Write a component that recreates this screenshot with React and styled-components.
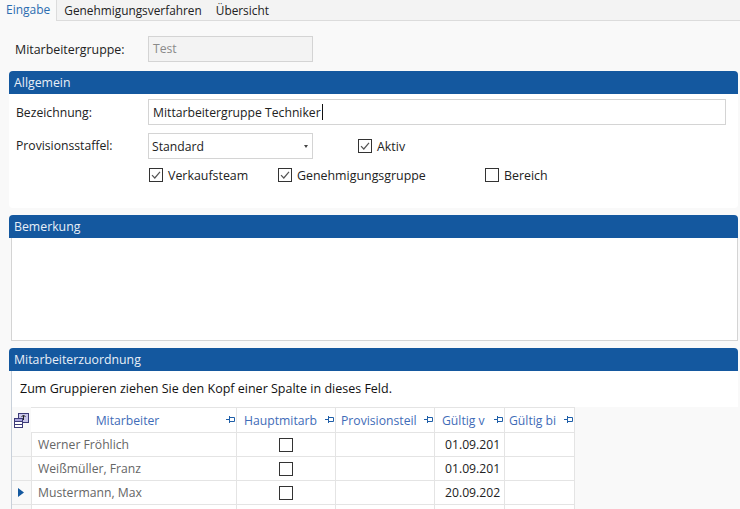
import styled, { createGlobalStyle } from 'styled-components';

const GlobalStyle = createGlobalStyle`
  html, body {
    margin: 0;
    height: 100%;
    overflow: hidden;
    background: #f9f9f9;
  }
  body {
    font-family: "Open Sans", "Noto Sans", sans-serif;
    font-size: 12.2px;
    color: #222;
  }
`;

const Page = styled.div`
  width: 740px;
  height: 509px;
  overflow: hidden;
`;

const TabBar = styled.div`
  display: flex;
  height: 20px;
  background: #f3f3f3;
  border-bottom: 1px solid #dcdcdc;
`;

const Tab = styled.div`
  height: ${p => (p.$active ? '21px' : '20px')};
  padding: 0 ${p => (p.$active ? '6px' : '7px')};
  line-height: 20px;
  font-size: ${p => (p.$active ? '12px' : '11.85px')};
  color: ${p => (p.$active ? '#2b6cb0' : '#222')};
  background: ${p => (p.$active ? '#f9f9f9' : 'transparent')};
  border-right: ${p => (p.$active ? '1px solid #dcdcdc' : 'none')};
`;

const Content = styled.div`
  padding: 15px 2px 0 9px;
`;

const TopRow = styled.div`
  display: flex;
  align-items: flex-start;
  height: 26px;
  margin-bottom: 9px;
`;

const Label = styled.label`
  width: ${p => p.$width || '139px'};
  padding-left: ${p => p.$indent || '7px'};
  margin-top: ${p => p.$nudge || '0'};
  font-size: ${p => p.$size || 'inherit'};
  box-sizing: border-box;
  flex-shrink: 0;
`;

const Section = styled.section`
  margin-bottom: ${p => p.$gap || '7px'};
`;

const SectionHeader = styled.div`
  height: 23px;
  line-height: 23px;
  padding-left: 5px;
  background: #14589f;
  color: #e8eff7;
  font-size: 12.3px;
  border-top-left-radius: 4px;
  border-top-right-radius: 4px;
`;

const FormBody = styled.div`
  height: 114px;
  background: #fff;
  border-radius: 0 0 4px 4px;
  padding-top: 5px;
  box-sizing: border-box;
`;

const FormRow = styled.div`
  display: flex;
  align-items: center;
  height: ${p => p.$height || '26px'};
  margin-bottom: ${p => p.$gap || '8px'};
`;

const Field = styled.div`
  width: ${p => p.$width || '165px'};
  height: 26px;
  box-sizing: border-box;
  display: flex;
  align-items: center;
  justify-content: space-between;
  padding: 0 ${p => p.$pad || '4px'};
  border: 1px solid #d4d4d4;
  background: ${p => (p.$disabled ? '#f3f3f3' : '#fff')};
  color: ${p => (p.$disabled ? '#8a8a8a' : '#222')};
`;

const Caret = styled.span`
  width: 1px;
  height: 16px;
  background: #111;
  margin-left: 1px;
`;

const FieldText = styled.span`
  display: flex;
  align-items: center;
  margin-top: ${p => p.$nudge || '0'};
`;

const SelectArrow = styled.span`
  border-left: 2.5px solid transparent;
  border-right: 2.5px solid transparent;
  border-top: 3px solid #444;
  margin-right: 1px;
`;

const Check = styled.span`
  width: 14px;
  height: 14px;
  box-sizing: border-box;
  border: 1px solid #333;
  background: #fff;
  display: flex;
  align-items: center;
  justify-content: center;
  flex-shrink: 0;
`;

const CheckItem = styled.div`
  display: flex;
  align-items: center;
  gap: 5px;
  font-size: 12.4px;
  margin-left: ${p => p.$left || '0'};
  width: ${p => p.$width || 'auto'};
`;

const NoteBody = styled.div`
  height: 102px;
  margin-left: 2px;
  background: #fff;
  border: 1px solid #d4d4d4;
  border-top: none;
`;

const AssignBody = styled.div`
  margin-left: 2px;
  border-left: 1px solid #c8d0da;
  height: 140px;
`;

const GroupHint = styled.div`
  height: 36px;
  line-height: 36px;
  padding-left: 8px;
  background: #fff;
  color: #111;
  font-size: 12.5px;
`;

const Grid = styled.div`
  display: grid;
  grid-template-columns: 19px 206px 99px 99px 70px 70px;
  grid-template-rows: 26px;
  grid-auto-rows: 24px;
  width: 563px;
  background: #fff;
`;

const Corner = styled.div`
  display: flex;
  align-items: center;
  padding-left: 2px;
  background: #f9f9f9;
`;

const HeadCell = styled.div`
  display: flex;
  align-items: center;
  justify-content: ${p => (p.$center ? 'center' : 'flex-start')};
  position: relative;
  padding: 0 ${p => p.$padRight || '0'} 0 ${p => p.$pad || '7px'};
  box-sizing: border-box;
  border-top: 1px solid #e4e4e4;
  border-right: 1px solid #e4e4e4;
  border-bottom: 1px solid #e4e4e4;
  color: #3f6cb8;
  background: #fff;
`;

const Pin = styled.svg`
  position: absolute;
  right: 1px;
  top: 8px;
`;

const RowMark = styled.div`
  display: flex;
  align-items: center;
  padding-left: 6px;
  background: #f9f9f9;
  border-bottom: 1px solid #e4e4e4;
`;

const Cell = styled.div`
  display: flex;
  align-items: center;
  justify-content: ${p => (p.$center ? 'center' : 'flex-start')};
  padding-left: ${p => (p.$center ? '0' : p.$pad || '6px')};
  box-sizing: border-box;
  overflow: hidden;
  white-space: nowrap;
  border-left: ${p => (p.$first ? '1px solid #e4e4e4' : 'none')};
  border-right: 1px solid #e4e4e4;
  border-bottom: 1px solid #e4e4e4;
  color: ${p => (p.$muted ? '#666' : '#222')};
`;

const Tick = () => (
  <svg width="10" height="10" viewBox="0 0 10 10">
    <path d="M1 5.2 L3.8 8 L9 1.8" fill="none" stroke="#555" strokeWidth="1.2" />
  </svg>
);

const PinIcon = () => (
  <Pin width="9" height="7" viewBox="0 0 9 7">
    <path d="M0 3.5 H3 M3.5 0 V7 M3.5 1.5 H8.5 V5.5 H3.5" fill="none" stroke="#1f5fa8" strokeWidth="1" />
  </Pin>
);

const ColumnChooser = () => (
  <svg width="15" height="15" viewBox="0 0 15 15">
    <rect x="4.5" y="0.5" width="10" height="9" fill="#c9c6ea" stroke="#3c3a78" />
    <path d="M9.5 7 V2.5 M7.5 4 L9.5 2 L11.5 4" fill="none" stroke="#222" />
    <rect x="0.5" y="5.5" width="8" height="9" fill="#fff" stroke="#3c3a78" />
    <path d="M0.5 8.5 H8.5 M0.5 11.5 H8.5" stroke="#3c3a78" />
    <rect x="1" y="6" width="7" height="2" fill="#a9a5dc" />
  </svg>
);

const columns = [
  { title: 'Mitarbeiter', center: true, pad: '0', padRight: '12px' },
  { title: 'Hauptmitarb' },
  { title: 'Provisionsteil', pad: '5px' },
  { title: 'Gültig v' },
  { title: 'Gültig bi', pad: '4px' },
];

const rows = [
  { name: 'Werner Fröhlich', from: '01.09.201' },
  { name: 'Weißmüller, Franz', from: '01.09.201' },
  { name: 'Mustermann, Max', from: '20.09.202', current: true },
  { name: '', from: '', blank: true },
];

const App = () => (
  <Page>
    <GlobalStyle />
    <TabBar>
      <Tab $active>Eingabe</Tab>
      <Tab>Genehmigungsverfahren</Tab>
      <Tab>Übersicht</Tab>
    </TabBar>
    <Content>
      <TopRow>
        <Label $indent="6px" $size="12.4px" $nudge="5px">Mitarbeitergruppe:</Label>
        <Field $disabled><FieldText $nudge="-2px">Test</FieldText></Field>
      </TopRow>
      <Section>
        <SectionHeader>Allgemein</SectionHeader>
        <FormBody>
          <FormRow>
            <Label>Bezeichnung:</Label>
            <Field $width="578px">
              <FieldText>
                Mittarbeitergruppe Techniker
                <Caret />
              </FieldText>
            </Field>
          </FormRow>
          <FormRow>
            <Label $nudge="-2px">Provisionsstaffel:</Label>
            <Field $pad="3px">
              Standard
              <SelectArrow />
            </Field>
            <CheckItem $left="45px">
              <Check><Tick /></Check>
              Aktiv
            </CheckItem>
          </FormRow>
          <FormRow $height="16px" $gap="0">
            <CheckItem $left="140px" $width="129px">
              <Check><Tick /></Check>
              Verkaufsteam
            </CheckItem>
            <CheckItem $width="207px">
              <Check><Tick /></Check>
              Genehmigungsgruppe
            </CheckItem>
            <CheckItem>
              <Check />
              Bereich
            </CheckItem>
          </FormRow>
        </FormBody>
      </Section>
      <Section>
        <SectionHeader>Bemerkung</SectionHeader>
        <NoteBody />
      </Section>
      <Section $gap="0">
        <SectionHeader>Mitarbeiterzuordnung</SectionHeader>
        <AssignBody>
          <GroupHint>Zum Gruppieren ziehen Sie den Kopf einer Spalte in dieses Feld.</GroupHint>
          <Grid>
            <Corner><ColumnChooser /></Corner>
            {columns.map(col => (
              <HeadCell key={col.title} $center={col.center} $pad={col.pad} $padRight={col.padRight}>
                {col.title}
                <PinIcon />
              </HeadCell>
            ))}
            {rows.map((row, i) => [
              <RowMark key={`m${i}`}>
                {row.current && (
                  <svg width="6" height="9" viewBox="0 0 6 9">
                    <path d="M0 0 L6 4.5 L0 9 Z" fill="#14589f" />
                  </svg>
                )}
              </RowMark>,
              <Cell key={`n${i}`} $first $muted>{row.name}</Cell>,
              <Cell key={`h${i}`} $center>{!row.blank && <Check />}</Cell>,
              <Cell key={`p${i}`} />,
              <Cell key={`f${i}`} $pad="10px">{row.from}</Cell>,
              <Cell key={`b${i}`} />,
            ])}
          </Grid>
        </AssignBody>
      </Section>
    </Content>
  </Page>
);

export default App;
